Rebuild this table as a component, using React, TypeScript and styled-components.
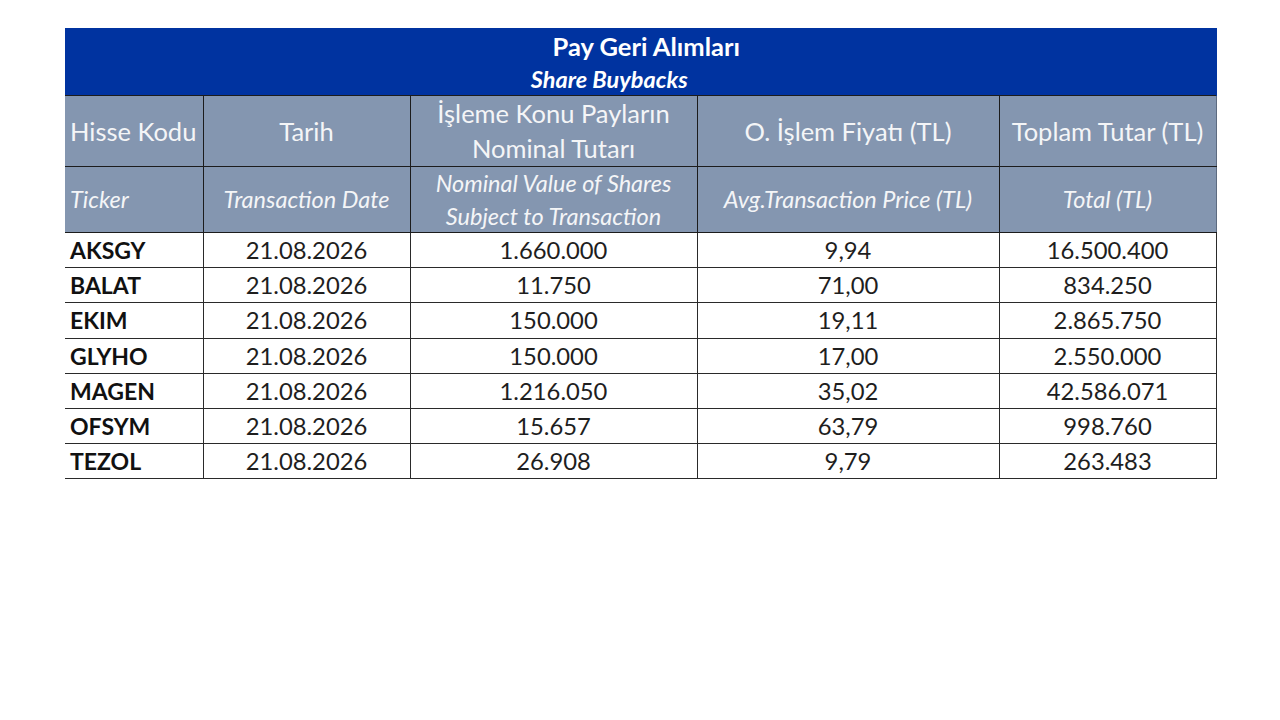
import React from "react";
import styled, { createGlobalStyle } from "styled-components";

const Global = createGlobalStyle`
  html, body { margin: 0; padding: 0; background: #ffffff; }
  body { font-family: "Lato", "Liberation Sans", sans-serif; }
`;

const Page = styled.div`
  width: 1280px;
  height: 720px;
  box-sizing: border-box;
  padding: 28px 0 0 65px;
  background: #ffffff;
`;

const Table = styled.table`
  border-collapse: collapse;
  table-layout: fixed;
  width: 1151px;
  font-family: "Lato", "Liberation Sans", sans-serif;
`;

const TitleCell = styled.th`
  background: #0033a0;
  color: #ffffff;
  height: 67px;
  padding: 0;
  text-align: center;
  vertical-align: top;
  border-right: 1px solid #0033a0;
`;

const Title = styled.div`
  font-size: 25.5px;
  font-weight: 700;
  line-height: 33px;
  padding-left: 12px;
  margin-top: 2px;
`;

const Subtitle = styled.div`
  font-size: 23.5px;
  font-weight: 700;
  font-style: italic;
  line-height: 32px;
  padding-right: 62px;
`;

const HeadCell = styled.th<{ $italic?: boolean; $left?: boolean; $h: number }>`
  background: #8496b0;
  color: #f4f5f7;
  height: ${(p) => p.$h}px;
  padding: 0 4px;
  padding-left: ${(p) => (p.$left ? "5px" : "4px")};
  text-align: ${(p) => (p.$left ? "left" : "center")};
  vertical-align: middle;
  font-weight: 400;
  font-style: ${(p) => (p.$italic ? "italic" : "normal")};
  font-size: ${(p) => (p.$italic ? "23.5px" : "25.5px")};
  line-height: ${(p) => (p.$italic ? "32.5px" : "35px")};
  white-space: nowrap;
  border: 1.5px solid #1c1c1c;
  border-left: none;
  &:last-child { border-right: 1px solid #5d6b80; }
`;

const Cell = styled.td<{ $bold?: boolean }>`
  height: 34px;
  padding: 0 4px;
  padding-left: ${(p) => (p.$bold ? "5px" : "4px")};
  text-align: ${(p) => (p.$bold ? "left" : "center")};
  vertical-align: middle;
  font-size: ${(p) => (p.$bold ? "23px" : "23.8px")};
  line-height: 34.2px;
  font-weight: ${(p) => (p.$bold ? 700 : 400)};
  color: ${(p) => (p.$bold ? "#111111" : "#1e1e1e")};
  border: 1.5px solid #2a2a2a;
  border-left: none;
  white-space: nowrap;
`;

const Col = styled.col<{ $w: number }>`
  width: ${(p) => p.$w}px;
`;

const rows = [
  ["AKSGY", "21.08.2026", "1.660.000", "9,94", "16.500.400"],
  ["BALAT", "21.08.2026", "11.750", "71,00", "834.250"],
  ["EKIM", "21.08.2026", "150.000", "19,11", "2.865.750"],
  ["GLYHO", "21.08.2026", "150.000", "17,00", "2.550.000"],
  ["MAGEN", "21.08.2026", "1.216.050", "35,02", "42.586.071"],
  ["OFSYM", "21.08.2026", "15.657", "63,79", "998.760"],
  ["TEZOL", "21.08.2026", "26.908", "9,79", "263.483"],
];

export default function App() {
  return (
    <Page>
      <Global />
      <Table>
        <colgroup>
          <Col $w={138} />
          <Col $w={207} />
          <Col $w={287} />
          <Col $w={302} />
          <Col $w={217} />
        </colgroup>
        <thead>
          <tr>
            <TitleCell colSpan={5}>
              <Title>Pay Geri Alımları</Title>
              <Subtitle>Share Buybacks</Subtitle>
            </TitleCell>
          </tr>
          <tr>
            <HeadCell $h={70} $left>Hisse Kodu</HeadCell>
            <HeadCell $h={70}>Tarih</HeadCell>
            <HeadCell $h={70}>
              İşleme Konu Payların
              <br />
              Nominal Tutarı
            </HeadCell>
            <HeadCell $h={70}>O. İşlem Fiyatı (TL)</HeadCell>
            <HeadCell $h={70}>Toplam Tutar (TL)</HeadCell>
          </tr>
          <tr>
            <HeadCell $h={65} $italic $left>Ticker</HeadCell>
            <HeadCell $h={65} $italic>Transaction Date</HeadCell>
            <HeadCell $h={65} $italic>
              Nominal Value of Shares
              <br />
              Subject to Transaction
            </HeadCell>
            <HeadCell $h={65} $italic>Avg.Transaction Price (TL)</HeadCell>
            <HeadCell $h={65} $italic>Total (TL)</HeadCell>
          </tr>
        </thead>
        <tbody>
          {rows.map((r) => (
            <tr key={r[0]}>
              <Cell $bold>{r[0]}</Cell>
              <Cell>{r[1]}</Cell>
              <Cell>{r[2]}</Cell>
              <Cell>{r[3]}</Cell>
              <Cell>{r[4]}</Cell>
            </tr>
          ))}
        </tbody>
      </Table>
    </Page>
  );
}
